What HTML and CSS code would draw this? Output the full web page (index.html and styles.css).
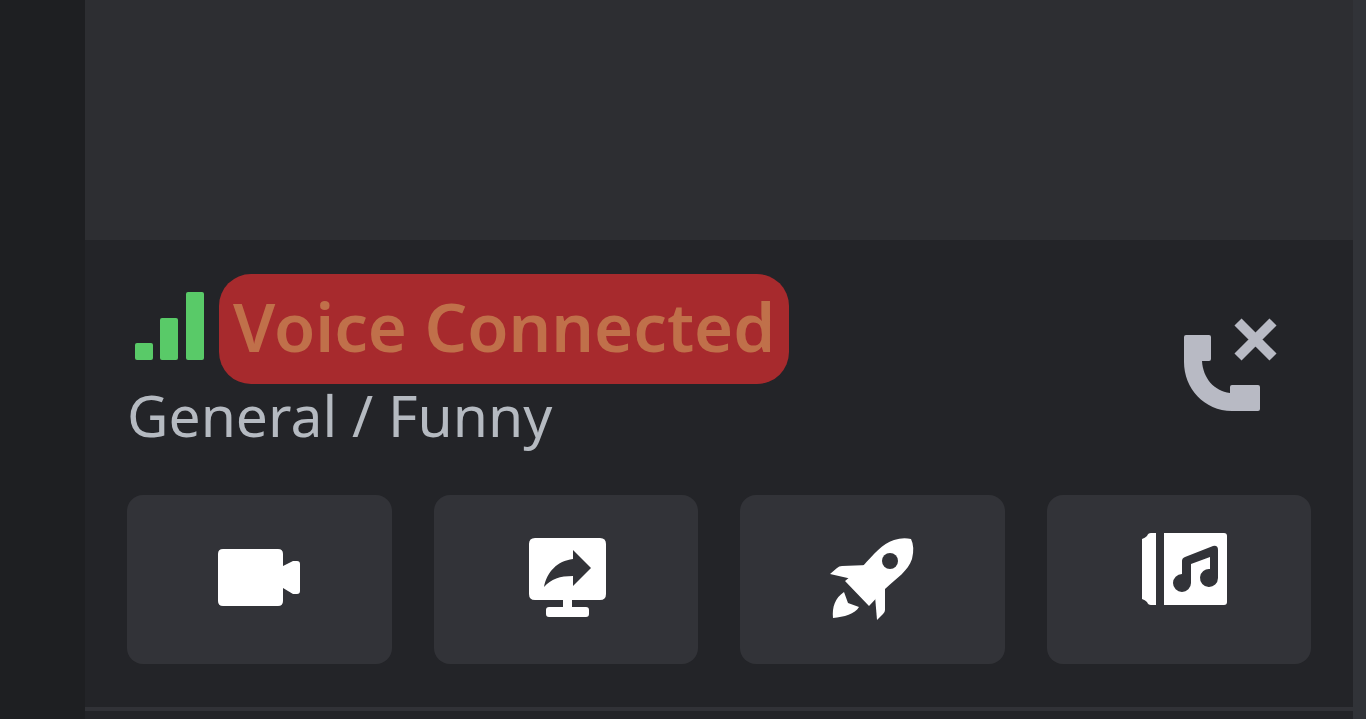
FILE: index.html
```html
<!DOCTYPE html>
<html lang="en">
	<head>
		<meta charset="UTF-8" />
		<meta name="viewport" content="width=device-width, initial-scale=1.0" />
		<title>Voice Connected</title>
		<link rel="stylesheet" href="styles.css">
	</head>
	<body>
		<nav class="servers"></nav>
		<div class="sidebar">
			<div class="channels"></div>
			<section class="voice-panel">
				<div class="voice-header">
					<div class="voice-info">
						<div class="voice-status">
							<svg class="signal" viewBox="0 0 70 68">
								<rect x="0" y="51" width="18" height="17" rx="2" />
								<rect x="25" y="26" width="18" height="42" rx="2" />
								<rect x="51" y="0" width="18" height="68" rx="2" />
							</svg>
							<span class="status-label">Voice Connected</span>
						</div>
						<a class="channel-link" href="#">General / Funny</a>
					</div>
					<button class="hangup-btn" aria-label="Disconnect">
						<svg viewBox="0 0 94 94">
							<path d="M2 17H25Q27 17 27 19V41Q27 43 25 43H18C19 60 30 73 46 75V69Q46 67 48 67H74Q76 67 76 69V91Q76 93 74 93H48C20 93 0 70 0 44V19Q0 17 2 17Z" />
							<path class="cross" d="M54 4L89 39M89 4L54 39" />
						</svg>
					</button>
				</div>
				<div class="actions">
					<button class="action-btn" aria-label="Turn on camera">
						<svg viewBox="0 0 96 96">
							<path d="M12 17H67Q72 17 72 22V34L82 29H86Q89 29 89 32V59Q89 62 86 62H82L72 56V69Q72 74 67 74H12Q7 74 7 69V22Q7 17 12 17Z" />
						</svg>
					</button>
					<button class="action-btn" aria-label="Share your screen">
						<svg viewBox="0 0 96 96">
							<path d="M17 6H82Q88 6 88 12V62Q88 68 82 68H54V75H68Q71 75 71 78V82Q71 85 68 85H31Q28 85 28 82V78Q28 75 31 75H45V68H17Q11 68 11 62V12Q11 6 17 6Z" />
							<path class="cutout" d="M55 18L73 36L55 54V44C42 44 33 47 26 55C29 40 39 29 55 27Z" />
						</svg>
					</button>
					<button class="action-btn" aria-label="Start an activity">
						<svg viewBox="0 0 96 96">
							<path d="M39 34C50 22 58 12 70 8Q79 5 87 7Q91 15 88 27C84 39 73 46 61 57L45 74L21 49Z" />
							<path d="M44 33L28 47L6 42L13 36Q15 34 18 34Z" />
							<path d="M61 54V78Q61 80 59 82L53 88L51 64Z" />
							<path d="M20 60L24 71L35 75C31 82 20 85 9 86C8 75 11 66 20 60Z" />
							<circle class="cutout" cx="66" cy="29" r="8" />
						</svg>
					</button>
					<button class="action-btn" aria-label="Open soundboard">
						<svg viewBox="0 0 96 96">
							<path d="M20 1H25V73H20Q17 73 16 70Q14 68 11 67V7Q14 6 16 4Q17 1 20 1Z" />
							<path d="M33 1H93Q96 1 96 4V70Q96 73 93 73H33Z" />
							<path class="cutout" d="M51 29Q51 26 54 25L82 14Q87 13 87 18V46A9 9 0 1 1 79 37V25L60 32V51A9 9 0 1 1 51 42Z" />
						</svg>
					</button>
				</div>
			</section>
			<div class="user-area"></div>
		</div>
		<main class="chat"></main>
	</body>
</html>
```
FILE: styles.css
```css
body {
	margin: 0;
	min-height: 100vh;
	display: flex;
	background: #1e1f22;
	font-family: "Noto Sans", sans-serif;
}

.servers {
	flex: 0 0 85px;
}

.sidebar {
	flex: 1;
	display: flex;
	flex-direction: column;
	background: #232428;
}

.channels {
	flex: 1;
	background: #2d2e32;
}

.chat {
	flex: 0 0 13px;
	background: #313338;
}

.voice-panel {
	padding: 34px 42px 43px;
	border-bottom: 4px solid #313237;
}

.voice-header {
	display: flex;
	align-items: center;
	justify-content: space-between;
	margin-bottom: 39px;
}

.voice-status {
	display: flex;
	align-items: center;
	gap: 14px;
	padding-left: 8px;
}

.signal {
	width: 70px;
	height: 68px;
	margin-bottom: 6px;
	fill: #59ca68;
}

.status-label {
	padding: 0 14px 6px;
	border-radius: 32px;
	background: #a72a2d;
	color: #c0704a;
	font-size: 67px;
	font-weight: 600;
	line-height: 104px;
	white-space: nowrap;
}

.channel-link {
	display: block;
	padding-bottom: 10px;
	color: #b5bac1;
	font-size: 57px;
	line-height: 62px;
	text-decoration: none;
	white-space: nowrap;
}

.hangup-btn {
	padding: 0;
	margin-right: 33px;
	border: none;
	background: none;
	cursor: pointer;
}

.hangup-btn svg {
	display: block;
	width: 94px;
	height: 94px;
	fill: #b8bac4;
}

.hangup-btn .cross {
	fill: none;
	stroke: #b8bac4;
	stroke-width: 10px;
}

.actions {
	display: grid;
	grid-template-columns: repeat(4, 1fr);
	gap: 42px;
}

.action-btn {
	display: flex;
	align-items: center;
	justify-content: center;
	height: 169px;
	padding: 0;
	border: none;
	border-radius: 16px;
	background: #323338;
	cursor: pointer;
}

.action-btn svg {
	width: 96px;
	height: 96px;
	fill: #ffffff;
}

.action-btn .cutout {
	fill: #323338;
}

.user-area {
	height: 8px;
}
```
